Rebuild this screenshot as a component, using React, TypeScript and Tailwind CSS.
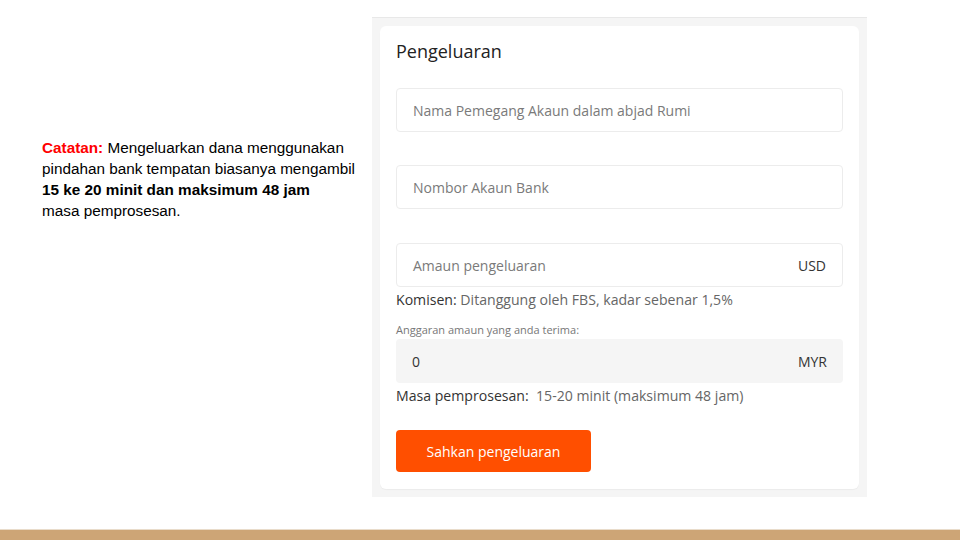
export default function App() {
  return (
    <div className="w-[960px] h-[540px] bg-white flex flex-col overflow-hidden">
      <div className="flex-1 flex">
        {/* Note on the left */}
        <div className="w-[372px] pl-[42px] pr-[4px] pt-[137px]">
          <p className="font-['Liberation_Sans',Arial,sans-serif] text-[15.3px] leading-[21px] text-black">
            <span className="font-bold text-[#ff0000]">Catatan:</span> Mengeluarkan dana menggunakan
            <br />
            pindahan bank tempatan biasanya mengambil
            <br />
            <span className="font-bold">15 ke 20 minit dan maksimum 48 jam</span>
            <br />
            masa pemprosesan.
          </p>
        </div>

        {/* Screenshot of the withdrawal form */}
        <div className="mt-[17px] w-[495px] h-[480px] bg-[#f5f5f5] border-t border-[#e8e8e8] p-[8px] font-['Open_Sans',sans-serif]">
          <div className="h-full bg-white rounded-md px-[16px] pt-[13px] shadow-[0_1px_1px_rgba(0,0,0,0.04)]">
            <h2 className="text-[18px] leading-[24px] text-[#222]">Pengeluaran</h2>

            <div className="mt-[25px] h-[44px] border border-[#ececec] rounded flex items-center px-[16px]">
              <span className="text-[14px] text-[#7a7a7a]">Nama Pemegang Akaun dalam abjad Rumi</span>
            </div>

            <div className="mt-[33px] h-[44px] border border-[#ececec] rounded flex items-center px-[16px]">
              <span className="text-[14px] text-[#7a7a7a]">Nombor Akaun Bank</span>
            </div>

            <div className="mt-[34px] h-[44px] border border-[#ececec] rounded flex items-center justify-between px-[16px]">
              <span className="text-[14px] text-[#7a7a7a]">Amaun pengeluaran</span>
              <span className="text-[14px] text-[#333]">USD</span>
            </div>

            <p className="mt-[3px] text-[14.1px] leading-[20px] text-[#666]">
              <span className="text-[#333]">Komisen:</span> Ditanggung oleh FBS, kadar sebenar 1,5%
            </p>

            <p className="mt-[12px] text-[11px] leading-[16px] text-[#777]">Anggaran amaun yang anda terima:</p>

            <div className="mt-[1px] h-[44px] bg-[#f5f5f5] rounded flex items-center justify-between px-[16px]">
              <span className="text-[14px] text-[#333]">0</span>
              <span className="text-[14px] text-[#333]">MYR</span>
            </div>

            <p className="mt-[3px] text-[14.1px] leading-[20px] text-[#666]">
              <span className="text-[#333]">Masa pemprosesan:</span>&nbsp; 15-20 minit (maksimum 48 jam)
            </p>

            <button className="mt-[24px] h-[42px] w-[195px] bg-[#ff4f00] rounded text-white text-[14px]">
              Sahkan pengeluaran
            </button>
          </div>
        </div>
      </div>

      <div className="h-[11px] bg-[#cda576] border-t border-[#e9dccb]" />
    </div>
  )
}
